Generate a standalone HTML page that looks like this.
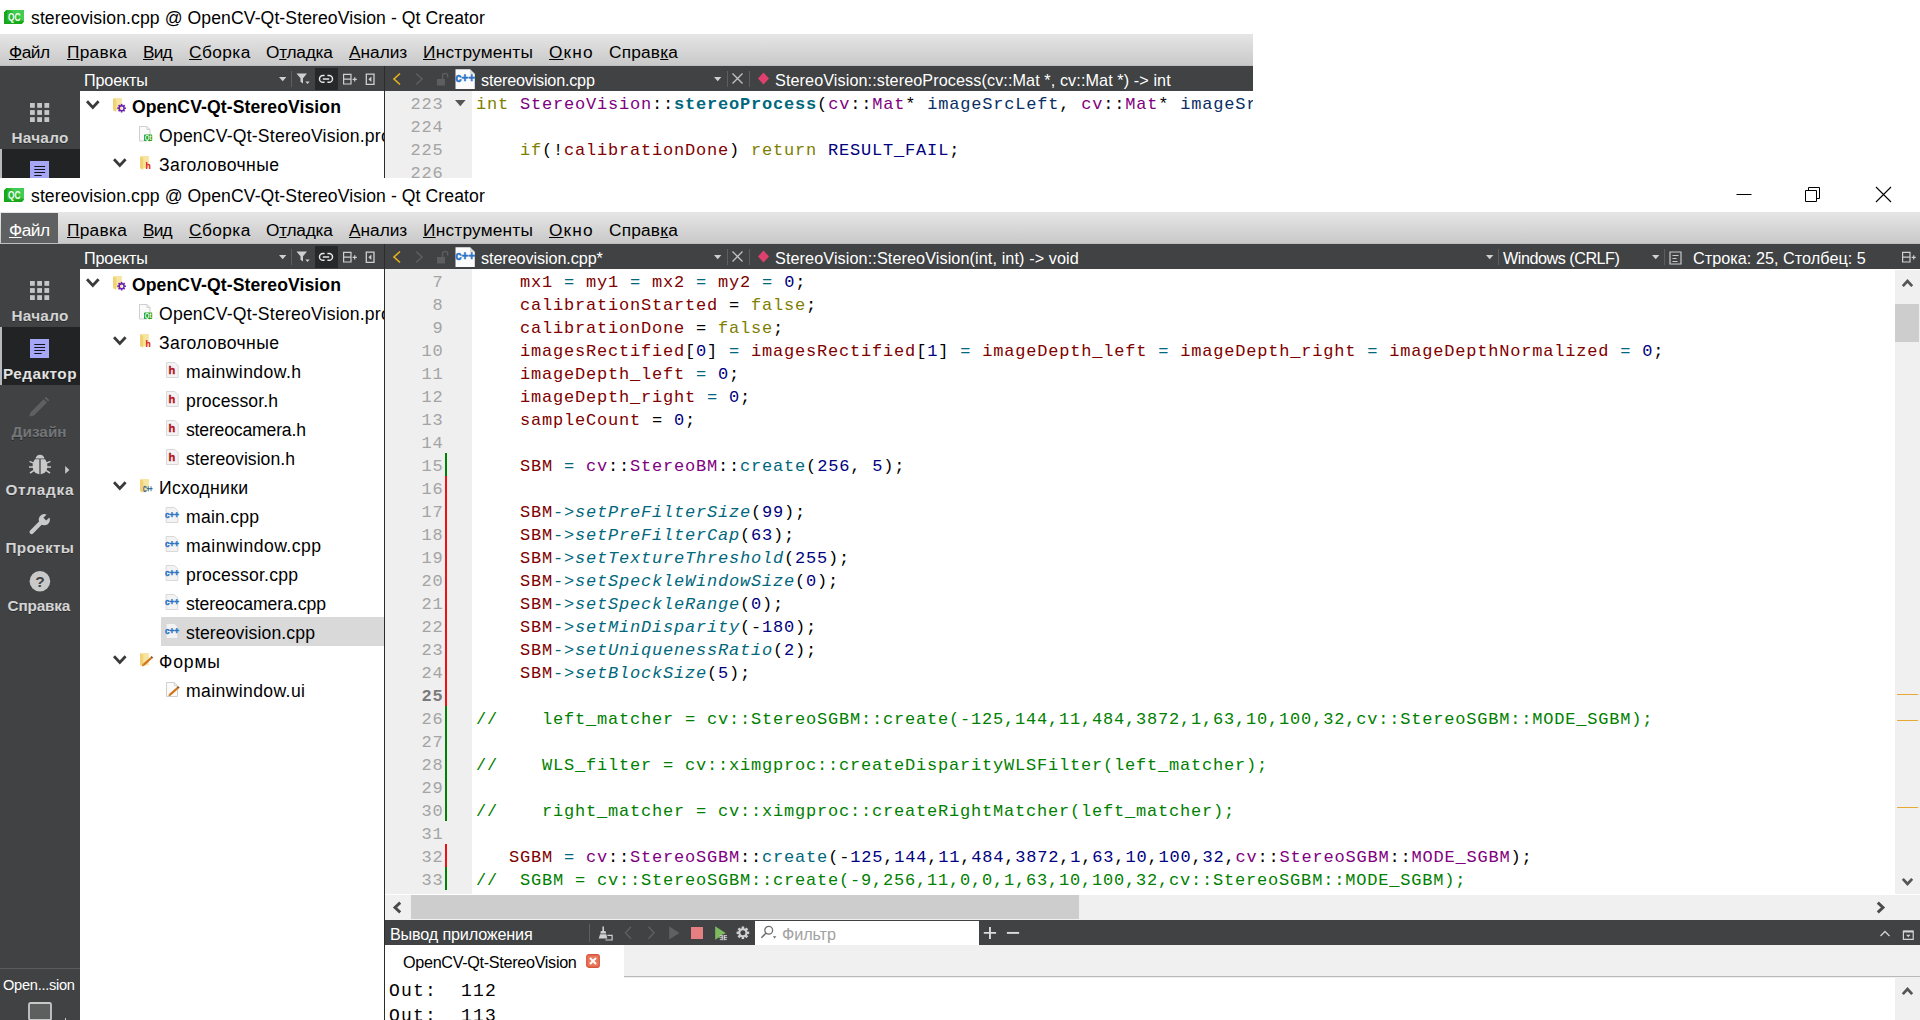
<!DOCTYPE html>
<html lang="ru"><head><meta charset="utf-8"><title>stereovision.cpp @ OpenCV-Qt-StereoVision - Qt Creator</title><style>
html,body{margin:0;padding:0}
body{width:1920px;height:1020px;overflow:hidden;background:#fff;position:relative;font-family:"Liberation Sans",sans-serif}
.win{position:absolute;overflow:hidden;background:#fff}
.r{position:absolute;display:block}
.t{position:absolute;white-space:pre;font-family:"Liberation Sans",sans-serif}
.cd{position:absolute;white-space:pre;font-family:"Liberation Mono",monospace;font-size:17px;letter-spacing:0.8px;line-height:23px;height:23px}
.ln{position:absolute;left:385px;width:58.600px;text-align:right;font-family:"Liberation Mono",monospace;font-size:17px;letter-spacing:0.8px;line-height:23px;height:23px;color:#a4a4a4}
u{text-decoration-thickness:1px;text-underline-offset:1px}
</style></head><body>
<div class="win" style="left:0;top:0;width:1253px;height:178px"><div class="r" style="left:0px;top:0px;width:1920px;height:35px;background:#fff;"></div><svg class="r" style="left:4px;top:10px" width="20" height="14" viewBox="0 0 20 14"><path d="M2.6 0H20V11.6L17.6 14H0V2.6Z" fill="#41cd52"/><path d="M2.6 0L0 2.6V14H17.6L20 11.6H3.2V0Z" fill="#17a81a"/><path d="M2.6 0H6L20 11.6L17.6 14H0V2.6Z" fill="#17a81a" opacity=".55"/><text x="3.9" y="10.600" font-family="Liberation Sans, sans-serif" font-size="11.800" font-weight="bold" fill="#f4fff4" textLength="12.6" lengthAdjust="spacingAndGlyphs">QC</text></svg><span class="t" style="left:31.0px;top:7.0px;font-size:17.6px;line-height:23px;color:#000;letter-spacing:0.095px;">stereovision.cpp @ OpenCV-Qt-StereoVision - Qt Creator</span><div class="r" style="left:0px;top:34px;width:1920px;height:32px;background:linear-gradient(#e6e6e6,#dedede 25%,#c8c8c8);"></div><div class="r" style="left:0px;top:65px;width:1920px;height:1px;background:#bebebe;"></div><span class="t" style="left:9px;top:41.3px;font-size:17.3px;line-height:22px;color:#000;letter-spacing:-0.511px"><u>Ф</u>айл</span><span class="t" style="left:67px;top:41.3px;font-size:17.3px;line-height:22px;color:#000;letter-spacing:0.272px"><u>П</u>равка</span><span class="t" style="left:143px;top:41.3px;font-size:17.3px;line-height:22px;color:#000;letter-spacing:-0.899px"><u>В</u>ид</span><span class="t" style="left:189px;top:41.3px;font-size:17.3px;line-height:22px;color:#000;letter-spacing:0.417px"><u>С</u>борка</span><span class="t" style="left:266px;top:41.3px;font-size:17.3px;line-height:22px;color:#000;letter-spacing:-0.264px">О<u>т</u>ладка</span><span class="t" style="left:349px;top:41.3px;font-size:17.3px;line-height:22px;color:#000;letter-spacing:-0.021px"><u>А</u>нализ</span><span class="t" style="left:423px;top:41.3px;font-size:17.3px;line-height:22px;color:#000;letter-spacing:0.213px"><u>И</u>нструменты</span><span class="t" style="left:549px;top:41.3px;font-size:17.3px;line-height:22px;color:#000;letter-spacing:1.133px"><u>О</u>кно</span><span class="t" style="left:609px;top:41.3px;font-size:17.3px;line-height:22px;color:#000;letter-spacing:0.189px">Справ<u>к</u>а</span><div class="r" style="left:0px;top:66px;width:1920px;height:25px;background:#404244;"></div><span class="t" style="left:84.0px;top:70.0px;font-size:16.2px;line-height:21px;color:#fff;letter-spacing:-0.168px;">Проекты</span><svg class="r" style="left:279px;top:76.8px" width="8" height="5" viewBox="0 0 8 5"><path d="M0 0H7.400L3.700 4.300Z" fill="#d0d0d0"/></svg><div class="r" style="left:291px;top:71px;width:1px;height:16px;background:#5c5e60;"></div><svg class="r" style="left:296px;top:73px" width="15" height="12" viewBox="0 0 15 12"><path d="M0.500 0.500H11L7 5.300V10.600L4.500 8.800V5.300Z" fill="#d0d0d0"/><path d="M9.300 8.600h4.400l-2.200 2.500z" fill="#d0d0d0"/></svg><div class="r" style="left:315px;top:68px;width:23px;height:22px;background:#262829;"></div><svg class="r" style="left:318px;top:74px" width="16" height="10" viewBox="0 0 16 10"><path d="M6.600 1.500H4.900a3.400 3.400 0 0 0 0 6.800H6.600 M9.400 1.500h1.700a3.400 3.400 0 0 1 0 6.800H9.400 M4.800 4.900H11.200" fill="none" stroke="#e8e8e8" stroke-width="1.500"/></svg><svg class="r" style="left:342px;top:73px" width="16" height="13" viewBox="0 0 16 13"><path d="M1.600 1.400h7.400v9.600h-7.400z M1.600 6.200h7.400" fill="none" stroke="#d0d0d0" stroke-width="1.200"/><path d="M10.600 6.300h4.200 M12.700 4.200v4.200" stroke="#d0d0d0" stroke-width="1.200"/></svg><svg class="r" style="left:365px;top:73px" width="11" height="13" viewBox="0 0 11 13"><path d="M1.300 1.100h7.700v10.200h-7.700z" fill="none" stroke="#d0d0d0" stroke-width="1.300"/><path d="M6.400 3.400v5.600l-3-2.800z" fill="#d0d0d0"/></svg><div class="r" style="left:384px;top:66px;width:1px;height:25px;background:#2b2c2d;"></div><svg class="r" style="left:391px;top:72px" width="12" height="14" viewBox="0 0 12 14"><path d="M9 1.5 L3 7 L9 12.5" fill="none" stroke="#e8b31c" stroke-width="1.6"/></svg><svg class="r" style="left:412.5px;top:72px" width="12" height="14" viewBox="0 0 12 14"><path d="M3 1.5 L9 7 L3 12.5" fill="none" stroke="#5c5e60" stroke-width="1.6"/></svg><svg class="r" style="left:436px;top:71px" width="14" height="16" viewBox="0 0 14 16"><rect x="1" y="8" width="8" height="6.5" fill="#5c5e60"/><path d="M6.5 8V5a2.6 2.6 0 0 1 5.2 0v1.5" fill="none" stroke="#5c5e60" stroke-width="1.4"/></svg><svg class="r" style="left:455px;top:69px" width="21" height="21" viewBox="0 0 21 21"><path d="M0.500 0.300H15L19.800 5V20H0.500Z" fill="#fbfbfb"/><path d="M15 0.300V5H19.800Z" fill="#dcdcdc"/><text x="0.200" y="12.800" font-family="Liberation Sans, sans-serif" font-weight="bold" font-size="12" fill="#2a74c8" stroke="#2a74c8" stroke-width="0.500" textLength="19.800" lengthAdjust="spacingAndGlyphs">c++</text></svg><span class="t" style="left:481.0px;top:70.0px;font-size:16.2px;line-height:21px;color:#fff;letter-spacing:-0.204px;">stereovision.cpp</span><svg class="r" style="left:714px;top:76.8px" width="8" height="5" viewBox="0 0 8 5"><path d="M0 0H7.400L3.700 4.300Z" fill="#d0d0d0"/></svg><div class="r" style="left:727px;top:71px;width:1px;height:16px;background:#5c5e60;"></div><svg class="r" style="left:731px;top:72px" width="13" height="13" viewBox="0 0 13 13"><path d="M1.5 1.5L11.5 11.5M11.5 1.5L1.5 11.5" stroke="#c4c4c4" stroke-width="1.3"/></svg><div class="r" style="left:749px;top:71px;width:1px;height:16px;background:#5c5e60;"></div><svg class="r" style="left:757px;top:72px" width="13" height="13" viewBox="0 0 13 13"><path d="M6.5 0.5L12 6.5L6.5 12.5L1 6.5Z" fill="#e0406e"/></svg><span class="t" style="left:775.0px;top:70.0px;font-size:16.2px;line-height:21px;color:#fff;letter-spacing:0.093px;">StereoVision::stereoProcess(cv::Mat *, cv::Mat *) -&gt; int</span><div class="r" style="left:0px;top:91px;width:80px;height:100px;background:#404244;"></div><svg class="r" style="left:29.6px;top:102.7px" width="20" height="20" viewBox="0 0 20 20"><rect x="0.0" y="0.0" width="4.800" height="4.800" fill="#c6c6c6"/><rect x="0.0" y="7.1" width="4.800" height="4.800" fill="#c6c6c6"/><rect x="0.0" y="14.2" width="4.800" height="4.800" fill="#c6c6c6"/><rect x="7.2" y="0.0" width="4.800" height="4.800" fill="#c6c6c6"/><rect x="7.2" y="7.1" width="4.800" height="4.800" fill="#c6c6c6"/><rect x="7.2" y="14.2" width="4.800" height="4.800" fill="#c6c6c6"/><rect x="14.4" y="0.0" width="4.800" height="4.800" fill="#c6c6c6"/><rect x="14.4" y="7.1" width="4.800" height="4.800" fill="#c6c6c6"/><rect x="14.4" y="14.2" width="4.800" height="4.800" fill="#c6c6c6"/></svg><span class="t" style="left:11.5px;top:127.9px;font-size:15.3px;line-height:20px;color:#d4d4d4;letter-spacing:0.273px;font-weight:bold;text-shadow:0 1px 0 rgba(0,0,0,.35);">Начало</span><div class="r" style="left:0px;top:149px;width:80px;height:58px;background:#212324;"></div><div class="r" style="left:0px;top:149px;width:2px;height:58px;background:#b8b8b8;"></div><svg class="r" style="left:30px;top:161px" width="19.3" height="19.3" viewBox="0 0 19.3 19.3"><rect width="19.3" height="19.3" fill="#a5a6f6"/><path d="M4.300 5.500h10.800M4.300 8.500h10.800M4.300 11.500h10.800M4.300 14.500h7.400" stroke="#101018" stroke-width="1"/></svg><span class="t" style="left:3.0px;top:185.9px;font-size:15.3px;line-height:20px;color:#e2e2e2;letter-spacing:0.472px;font-weight:bold;text-shadow:0 1px 0 rgba(0,0,0,.35);">Редактор</span><svg class="r" style="left:86px;top:100.0px" width="14" height="11" viewBox="0 0 14 11"><path d="M1 1.2 L6.8 7.4 L12.6 1.2" fill="none" stroke="#3a3a3a" stroke-width="2.8"/></svg><svg class="r" style="left:112.7px;top:98.2px" width="14" height="15" viewBox="0 0 14 15"><path d="M0.7 0H8.8V12.3H3.2Z" fill="#f7e4a0"/><path d="M0 0.3L3.3 2V13.8L0 12.3Z" fill="#f1d375"/><g transform="translate(8.6,10.2)"><rect x="-0.8" y="-4.3" width="1.6" height="2" fill="#6a1fb0" transform="rotate(0)"/><rect x="-0.8" y="-4.3" width="1.6" height="2" fill="#6a1fb0" transform="rotate(45)"/><rect x="-0.8" y="-4.3" width="1.6" height="2" fill="#6a1fb0" transform="rotate(90)"/><rect x="-0.8" y="-4.3" width="1.6" height="2" fill="#6a1fb0" transform="rotate(135)"/><rect x="-0.8" y="-4.3" width="1.6" height="2" fill="#6a1fb0" transform="rotate(180)"/><rect x="-0.8" y="-4.3" width="1.6" height="2" fill="#6a1fb0" transform="rotate(225)"/><rect x="-0.8" y="-4.3" width="1.6" height="2" fill="#6a1fb0" transform="rotate(270)"/><rect x="-0.8" y="-4.3" width="1.6" height="2" fill="#6a1fb0" transform="rotate(315)"/><circle r="2.4" fill="none" stroke="#6a1fb0" stroke-width="1.4"/></g></svg><span class="t" style="left:132.0px;top:95.5px;font-size:17.6px;line-height:23px;color:#000;letter-spacing:0.095px;font-weight:bold;">OpenCV-Qt-StereoVision</span><svg class="r" style="left:139px;top:126.3px" width="14" height="16" viewBox="0 0 14 16"><path d="M0.5 0.5h7.5l3 3v11.5h-10.5z" fill="#fafafa" stroke="#cfcfcf" stroke-width="1"/><path d="M8 0.5v3h3" fill="none" stroke="#cfcfcf" stroke-width="1"/><rect x="5" y="8.6" width="8.2" height="6.4" rx="0.8" fill="#21a321"/><text x="5.8" y="14.1" font-size="6.8" font-weight="bold" fill="#fff" font-family="Liberation Sans, sans-serif" textLength="6.6" lengthAdjust="spacingAndGlyphs">Qt</text></svg><span class="t" style="left:159.0px;top:124.5px;font-size:17.6px;line-height:23px;color:#000;letter-spacing:0.206px;">OpenCV-Qt-StereoVision.pro</span><svg class="r" style="left:113px;top:158.0px" width="14" height="11" viewBox="0 0 14 11"><path d="M1 1.2 L6.8 7.4 L12.6 1.2" fill="none" stroke="#3a3a3a" stroke-width="2.8"/></svg><svg class="r" style="left:139.8px;top:156.4px" width="14" height="15" viewBox="0 0 14 15"><path d="M0.7 0H8.8V12.3H3.2Z" fill="#f7e4a0"/><path d="M0 0.3L3.3 2V13.8L0 12.3Z" fill="#f1d375"/><text x="5.4" y="13.2" font-size="8.8" font-weight="bold" fill="#e01010" font-family="Liberation Sans, sans-serif">h</text></svg><span class="t" style="left:159.0px;top:153.5px;font-size:17.6px;line-height:23px;color:#000;letter-spacing:0.364px;">Заголовочные</span><div class="r" style="left:384px;top:91px;width:1px;height:100px;background:#2b2c2d;"></div><div class="r" style="left:385px;top:91px;width:87px;height:100px;background:#efefef;"></div><span class="ln" style="top:92.8px;">223</span><span class="cd" style="left:476px;top:92.8px"><span style="color:#808000">int</span><span style="color:#000"> </span><span style="color:#800080">StereoVision</span><span style="color:#000">::</span><span style="color:#00677c;font-weight:bold">stereoProcess</span><span style="color:#000">(</span><span style="color:#800080">cv</span><span style="color:#000">::</span><span style="color:#800080">Mat</span><span style="color:#000">* </span><span style="color:#092e64">imageSrcLeft</span><span style="color:#000">, </span><span style="color:#800080">cv</span><span style="color:#000">::</span><span style="color:#800080">Mat</span><span style="color:#000">* </span><span style="color:#092e64">imageSrcRight</span></span><span class="ln" style="top:115.8px;">224</span><span class="ln" style="top:138.8px;">225</span><span class="cd" style="left:520px;top:138.8px"><span style="color:#808000">if</span><span style="color:#000">(!</span><span style="color:#800000">calibrationDone</span><span style="color:#000">) </span><span style="color:#808000">return</span><span style="color:#000"> </span><span style="color:#000080">RESULT_FAIL</span><span style="color:#000">;</span></span><span class="ln" style="top:161.8px;">226</span><svg class="r" style="left:455px;top:99.5px" width="11" height="7" viewBox="0 0 11 7"><path d="M0 0H10.600L5.300 6.200Z" fill="#555"/></svg></div>
<div class="win" style="left:0;top:178px;width:1920px;height:842px"><div class="r" style="left:0px;top:0px;width:1920px;height:35px;background:#fff;"></div><svg class="r" style="left:4px;top:10px" width="20" height="14" viewBox="0 0 20 14"><path d="M2.6 0H20V11.6L17.6 14H0V2.6Z" fill="#41cd52"/><path d="M2.6 0L0 2.6V14H17.6L20 11.6H3.2V0Z" fill="#17a81a"/><path d="M2.6 0H6L20 11.6L17.6 14H0V2.6Z" fill="#17a81a" opacity=".55"/><text x="3.9" y="10.600" font-family="Liberation Sans, sans-serif" font-size="11.800" font-weight="bold" fill="#f4fff4" textLength="12.6" lengthAdjust="spacingAndGlyphs">QC</text></svg><span class="t" style="left:31.0px;top:7.0px;font-size:17.6px;line-height:23px;color:#000;letter-spacing:0.095px;">stereovision.cpp @ OpenCV-Qt-StereoVision - Qt Creator</span><svg class="r" style="left:1735px;top:8px" width="20" height="20" viewBox="0 0 20 20"><path d="M1.5 8.5H16.5" stroke="#000" stroke-width="1"/></svg><svg class="r" style="left:1804px;top:7px" width="20" height="20" viewBox="0 0 20 20"><path d="M1.5 5.5h11v11h-11z M4.5 5.5v-3h11v11h-3" fill="none" stroke="#000" stroke-width="1"/></svg><svg class="r" style="left:1875px;top:8px" width="20" height="20" viewBox="0 0 20 20"><path d="M1 1 L16 16 M16 1 L1 16" stroke="#000" stroke-width="1.1"/></svg><div class="r" style="left:0px;top:34px;width:1920px;height:32px;background:linear-gradient(#e6e6e6,#dedede 25%,#c8c8c8);"></div><div class="r" style="left:0px;top:65px;width:1920px;height:1px;background:#bebebe;"></div><div class="r" style="left:1px;top:35px;width:57px;height:30px;background:#5f6061;"></div><span class="t" style="left:9px;top:41.3px;font-size:17.3px;line-height:22px;color:#fff;letter-spacing:-0.511px"><u>Ф</u>айл</span><span class="t" style="left:67px;top:41.3px;font-size:17.3px;line-height:22px;color:#000;letter-spacing:0.272px"><u>П</u>равка</span><span class="t" style="left:143px;top:41.3px;font-size:17.3px;line-height:22px;color:#000;letter-spacing:-0.899px"><u>В</u>ид</span><span class="t" style="left:189px;top:41.3px;font-size:17.3px;line-height:22px;color:#000;letter-spacing:0.417px"><u>С</u>борка</span><span class="t" style="left:266px;top:41.3px;font-size:17.3px;line-height:22px;color:#000;letter-spacing:-0.264px">О<u>т</u>ладка</span><span class="t" style="left:349px;top:41.3px;font-size:17.3px;line-height:22px;color:#000;letter-spacing:-0.021px"><u>А</u>нализ</span><span class="t" style="left:423px;top:41.3px;font-size:17.3px;line-height:22px;color:#000;letter-spacing:0.213px"><u>И</u>нструменты</span><span class="t" style="left:549px;top:41.3px;font-size:17.3px;line-height:22px;color:#000;letter-spacing:1.133px"><u>О</u>кно</span><span class="t" style="left:609px;top:41.3px;font-size:17.3px;line-height:22px;color:#000;letter-spacing:0.189px">Справ<u>к</u>а</span><div class="r" style="left:0px;top:66px;width:1920px;height:25px;background:#404244;"></div><span class="t" style="left:84.0px;top:70.0px;font-size:16.2px;line-height:21px;color:#fff;letter-spacing:-0.168px;">Проекты</span><svg class="r" style="left:279px;top:76.8px" width="8" height="5" viewBox="0 0 8 5"><path d="M0 0H7.400L3.700 4.300Z" fill="#d0d0d0"/></svg><div class="r" style="left:291px;top:71px;width:1px;height:16px;background:#5c5e60;"></div><svg class="r" style="left:296px;top:73px" width="15" height="12" viewBox="0 0 15 12"><path d="M0.500 0.500H11L7 5.300V10.600L4.500 8.800V5.300Z" fill="#d0d0d0"/><path d="M9.300 8.600h4.400l-2.200 2.500z" fill="#d0d0d0"/></svg><div class="r" style="left:315px;top:68px;width:23px;height:22px;background:#262829;"></div><svg class="r" style="left:318px;top:74px" width="16" height="10" viewBox="0 0 16 10"><path d="M6.600 1.500H4.900a3.400 3.400 0 0 0 0 6.800H6.600 M9.400 1.500h1.700a3.400 3.400 0 0 1 0 6.800H9.400 M4.800 4.900H11.200" fill="none" stroke="#e8e8e8" stroke-width="1.500"/></svg><svg class="r" style="left:342px;top:73px" width="16" height="13" viewBox="0 0 16 13"><path d="M1.600 1.400h7.400v9.600h-7.400z M1.600 6.200h7.400" fill="none" stroke="#d0d0d0" stroke-width="1.200"/><path d="M10.600 6.300h4.200 M12.700 4.200v4.200" stroke="#d0d0d0" stroke-width="1.200"/></svg><svg class="r" style="left:365px;top:73px" width="11" height="13" viewBox="0 0 11 13"><path d="M1.300 1.100h7.700v10.200h-7.700z" fill="none" stroke="#d0d0d0" stroke-width="1.300"/><path d="M6.400 3.400v5.600l-3-2.800z" fill="#d0d0d0"/></svg><div class="r" style="left:384px;top:66px;width:1px;height:25px;background:#2b2c2d;"></div><svg class="r" style="left:391px;top:72px" width="12" height="14" viewBox="0 0 12 14"><path d="M9 1.5 L3 7 L9 12.5" fill="none" stroke="#e8b31c" stroke-width="1.6"/></svg><svg class="r" style="left:412.5px;top:72px" width="12" height="14" viewBox="0 0 12 14"><path d="M3 1.5 L9 7 L3 12.5" fill="none" stroke="#5c5e60" stroke-width="1.6"/></svg><svg class="r" style="left:436px;top:71px" width="14" height="16" viewBox="0 0 14 16"><rect x="1" y="8" width="8" height="6.5" fill="#5c5e60"/><path d="M6.5 8V5a2.6 2.6 0 0 1 5.2 0v1.5" fill="none" stroke="#5c5e60" stroke-width="1.4"/></svg><svg class="r" style="left:455px;top:69px" width="21" height="21" viewBox="0 0 21 21"><path d="M0.500 0.300H15L19.800 5V20H0.500Z" fill="#fbfbfb"/><path d="M15 0.300V5H19.800Z" fill="#dcdcdc"/><text x="0.200" y="12.800" font-family="Liberation Sans, sans-serif" font-weight="bold" font-size="12" fill="#2a74c8" stroke="#2a74c8" stroke-width="0.500" textLength="19.800" lengthAdjust="spacingAndGlyphs">c++</text></svg><span class="t" style="left:481.0px;top:70.0px;font-size:16.2px;line-height:21px;color:#fff;letter-spacing:-0.086px;">stereovision.cpp*</span><svg class="r" style="left:714px;top:76.8px" width="8" height="5" viewBox="0 0 8 5"><path d="M0 0H7.400L3.700 4.300Z" fill="#d0d0d0"/></svg><div class="r" style="left:727px;top:71px;width:1px;height:16px;background:#5c5e60;"></div><svg class="r" style="left:731px;top:72px" width="13" height="13" viewBox="0 0 13 13"><path d="M1.5 1.5L11.5 11.5M11.5 1.5L1.5 11.5" stroke="#c4c4c4" stroke-width="1.3"/></svg><div class="r" style="left:749px;top:71px;width:1px;height:16px;background:#5c5e60;"></div><svg class="r" style="left:757px;top:72px" width="13" height="13" viewBox="0 0 13 13"><path d="M6.5 0.5L12 6.5L6.5 12.5L1 6.5Z" fill="#e0406e"/></svg><span class="t" style="left:775.0px;top:70.0px;font-size:16.2px;line-height:21px;color:#fff;letter-spacing:0.100px;">StereoVision::StereoVision(int, int) -&gt; void</span><svg class="r" style="left:1486px;top:76.8px" width="8" height="5" viewBox="0 0 8 5"><path d="M0 0H7.400L3.700 4.300Z" fill="#d0d0d0"/></svg><div class="r" style="left:1498px;top:71px;width:1px;height:16px;background:#5c5e60;"></div><span class="t" style="left:1503.0px;top:70.0px;font-size:16.2px;line-height:21px;color:#fff;letter-spacing:-0.486px;">Windows (CRLF)</span><svg class="r" style="left:1652px;top:76.8px" width="8" height="5" viewBox="0 0 8 5"><path d="M0 0H7.400L3.700 4.300Z" fill="#d0d0d0"/></svg><div class="r" style="left:1664px;top:71px;width:1px;height:16px;background:#5c5e60;"></div><svg class="r" style="left:1669px;top:72.7px" width="13" height="14" viewBox="0 0 13 14"><path d="M1 1h11v12H1z" fill="none" stroke="#c8c8c8" stroke-width="1.2"/><path d="M3.5 4.5h6M3.5 7.5h4M3.5 10.5h5" stroke="#c8c8c8" stroke-width="1.2"/></svg><span class="t" style="left:1693.0px;top:70.0px;font-size:16.2px;line-height:21px;color:#fff;letter-spacing:0.045px;">Строка: 25, Столбец: 5</span><svg class="r" style="left:1901px;top:73px" width="18" height="13" viewBox="0 0 18 13"><path d="M1.600 1.400h7.400v9.600h-7.400z M1.600 6.200h7.400" fill="none" stroke="#d0d0d0" stroke-width="1.200"/><path d="M10.600 6.300h4.200 M12.700 4.200v4.200" stroke="#d0d0d0" stroke-width="1.200"/></svg><div class="r" style="left:0px;top:91px;width:80px;height:760px;background:#404244;"></div><svg class="r" style="left:29.6px;top:102.7px" width="20" height="20" viewBox="0 0 20 20"><rect x="0.0" y="0.0" width="4.800" height="4.800" fill="#c6c6c6"/><rect x="0.0" y="7.1" width="4.800" height="4.800" fill="#c6c6c6"/><rect x="0.0" y="14.2" width="4.800" height="4.800" fill="#c6c6c6"/><rect x="7.2" y="0.0" width="4.800" height="4.800" fill="#c6c6c6"/><rect x="7.2" y="7.1" width="4.800" height="4.800" fill="#c6c6c6"/><rect x="7.2" y="14.2" width="4.800" height="4.800" fill="#c6c6c6"/><rect x="14.4" y="0.0" width="4.800" height="4.800" fill="#c6c6c6"/><rect x="14.4" y="7.1" width="4.800" height="4.800" fill="#c6c6c6"/><rect x="14.4" y="14.2" width="4.800" height="4.800" fill="#c6c6c6"/></svg><span class="t" style="left:11.5px;top:127.9px;font-size:15.3px;line-height:20px;color:#d4d4d4;letter-spacing:0.273px;font-weight:bold;text-shadow:0 1px 0 rgba(0,0,0,.35);">Начало</span><div class="r" style="left:0px;top:149px;width:80px;height:58px;background:#212324;"></div><div class="r" style="left:0px;top:149px;width:2px;height:58px;background:#b8b8b8;"></div><svg class="r" style="left:30px;top:161px" width="19.3" height="19.3" viewBox="0 0 19.3 19.3"><rect width="19.3" height="19.3" fill="#a5a6f6"/><path d="M4.300 5.500h10.800M4.300 8.500h10.800M4.300 11.500h10.800M4.300 14.500h7.400" stroke="#101018" stroke-width="1"/></svg><span class="t" style="left:3.0px;top:185.9px;font-size:15.3px;line-height:20px;color:#e2e2e2;letter-spacing:0.472px;font-weight:bold;text-shadow:0 1px 0 rgba(0,0,0,.35);">Редактор</span><svg class="r" style="left:28px;top:218px" width="24" height="24" viewBox="0 0 24 24"><path d="M1.2 20.6L2.6 16.2L15.6 3.2L19 6.6L6 19.6Z" fill="#5e6062"/><path d="M16.6 2.2L18 0.8L21.4 4.2L20 5.6Z" fill="#5e6062"/></svg><span class="t" style="left:11.5px;top:243.9px;font-size:15.3px;line-height:20px;color:#737577;letter-spacing:0.047px;font-weight:bold;text-shadow:0 1px 0 rgba(0,0,0,.35);">Дизайн</span><svg class="r" style="left:28px;top:276px" width="24" height="22" viewBox="0 0 24 22"><path d="M12 0.8c2.4 0 4 1.6 4.4 3.6H7.6C8 2.4 9.600 0.8 12 0.8z" fill="#c9c9c9"/><path d="M7 5.200h10c1.6 2 2.400 4.400 2.400 7 0 4.400-3 8-7.400 8s-7.400-3.600-7.400-8c0-2.600 0.800-5 2.400-7z" fill="#c9c9c9"/><path d="M12 5V20.400" stroke="#404244" stroke-width="1.3"/><path d="M1.600 7.400L6 9.400M1 13h4.400M2 19l4-2.600M22.400 7.400L18 9.400M23 13h-4.400M22 19l-4-2.600" stroke="#c9c9c9" stroke-width="1.5"/></svg><span class="t" style="left:5.4px;top:301.9px;font-size:15.3px;line-height:20px;color:#d4d4d4;letter-spacing:0.800px;font-weight:bold;text-shadow:0 1px 0 rgba(0,0,0,.35);">Отладка</span><svg class="r" style="left:64.6px;top:288.4px" width="5" height="8" viewBox="0 0 5 8"><path d="M0.2 0L4.4 3.900L0.2 7.800Z" fill="#c9c9c9"/></svg><svg class="r" style="left:28px;top:334px" width="24" height="24" viewBox="0 0 24 24"><path d="M3.600 20L12 11.600" stroke="#c9c9c9" stroke-width="4.200" stroke-linecap="round"/><path d="M21.400 5.400L18.200 8.600L15.400 5.800L18.600 2.600A5.600 5.600 0 1 0 21.400 5.400Z" fill="#c9c9c9"/></svg><span class="t" style="left:5.4px;top:359.9px;font-size:15.3px;line-height:20px;color:#d4d4d4;letter-spacing:0.347px;font-weight:bold;text-shadow:0 1px 0 rgba(0,0,0,.35);">Проекты</span><svg class="r" style="left:29px;top:393px" width="22" height="22" viewBox="0 0 22 22"><circle cx="10.9" cy="10.300" r="10.300" fill="#c9c9c9"/><text x="10.9" y="16" text-anchor="middle" font-family="Liberation Sans, sans-serif" font-weight="bold" font-size="15.5" fill="#404244">?</text></svg><span class="t" style="left:7.6px;top:417.9px;font-size:15.3px;line-height:20px;color:#d4d4d4;letter-spacing:-0.153px;font-weight:bold;text-shadow:0 1px 0 rgba(0,0,0,.35);">Справка</span><svg class="r" style="left:86px;top:100.0px" width="14" height="11" viewBox="0 0 14 11"><path d="M1 1.2 L6.8 7.4 L12.6 1.2" fill="none" stroke="#3a3a3a" stroke-width="2.8"/></svg><svg class="r" style="left:112.7px;top:98.2px" width="14" height="15" viewBox="0 0 14 15"><path d="M0.7 0H8.8V12.3H3.2Z" fill="#f7e4a0"/><path d="M0 0.3L3.3 2V13.8L0 12.3Z" fill="#f1d375"/><g transform="translate(8.6,10.2)"><rect x="-0.8" y="-4.3" width="1.6" height="2" fill="#6a1fb0" transform="rotate(0)"/><rect x="-0.8" y="-4.3" width="1.6" height="2" fill="#6a1fb0" transform="rotate(45)"/><rect x="-0.8" y="-4.3" width="1.6" height="2" fill="#6a1fb0" transform="rotate(90)"/><rect x="-0.8" y="-4.3" width="1.6" height="2" fill="#6a1fb0" transform="rotate(135)"/><rect x="-0.8" y="-4.3" width="1.6" height="2" fill="#6a1fb0" transform="rotate(180)"/><rect x="-0.8" y="-4.3" width="1.6" height="2" fill="#6a1fb0" transform="rotate(225)"/><rect x="-0.8" y="-4.3" width="1.6" height="2" fill="#6a1fb0" transform="rotate(270)"/><rect x="-0.8" y="-4.3" width="1.6" height="2" fill="#6a1fb0" transform="rotate(315)"/><circle r="2.4" fill="none" stroke="#6a1fb0" stroke-width="1.4"/></g></svg><span class="t" style="left:132.0px;top:95.5px;font-size:17.6px;line-height:23px;color:#000;letter-spacing:0.095px;font-weight:bold;">OpenCV-Qt-StereoVision</span><svg class="r" style="left:139px;top:126.3px" width="14" height="16" viewBox="0 0 14 16"><path d="M0.5 0.5h7.5l3 3v11.5h-10.5z" fill="#fafafa" stroke="#cfcfcf" stroke-width="1"/><path d="M8 0.5v3h3" fill="none" stroke="#cfcfcf" stroke-width="1"/><rect x="5" y="8.6" width="8.2" height="6.4" rx="0.8" fill="#21a321"/><text x="5.8" y="14.1" font-size="6.8" font-weight="bold" fill="#fff" font-family="Liberation Sans, sans-serif" textLength="6.6" lengthAdjust="spacingAndGlyphs">Qt</text></svg><span class="t" style="left:159.0px;top:124.5px;font-size:17.6px;line-height:23px;color:#000;letter-spacing:0.206px;">OpenCV-Qt-StereoVision.pro</span><svg class="r" style="left:113px;top:158.0px" width="14" height="11" viewBox="0 0 14 11"><path d="M1 1.2 L6.8 7.4 L12.6 1.2" fill="none" stroke="#3a3a3a" stroke-width="2.8"/></svg><svg class="r" style="left:139.8px;top:156.4px" width="14" height="15" viewBox="0 0 14 15"><path d="M0.7 0H8.8V12.3H3.2Z" fill="#f7e4a0"/><path d="M0 0.3L3.3 2V13.8L0 12.3Z" fill="#f1d375"/><text x="5.4" y="13.2" font-size="8.8" font-weight="bold" fill="#e01010" font-family="Liberation Sans, sans-serif">h</text></svg><span class="t" style="left:159.0px;top:153.5px;font-size:17.6px;line-height:23px;color:#000;letter-spacing:0.364px;">Заголовочные</span><svg class="r" style="left:166.2px;top:183.8px" width="14" height="17" viewBox="0 0 14 17"><path d="M0.5 0.5H8.8L12.2 3.9V15.5H0.5Z" fill="#f3f3f3" stroke="#d8d8d8" stroke-width="1"/><text x="2.4" y="11.9" font-size="10.5" font-weight="bold" fill="#b3121c" stroke="#b3121c" stroke-width="0.3" font-family="Liberation Sans, sans-serif" textLength="6.8" lengthAdjust="spacingAndGlyphs">h</text></svg><span class="t" style="left:186.0px;top:182.5px;font-size:17.6px;line-height:23px;color:#000;letter-spacing:0.404px;">mainwindow.h</span><svg class="r" style="left:166.2px;top:212.8px" width="14" height="17" viewBox="0 0 14 17"><path d="M0.5 0.5H8.8L12.2 3.9V15.5H0.5Z" fill="#f3f3f3" stroke="#d8d8d8" stroke-width="1"/><text x="2.4" y="11.9" font-size="10.5" font-weight="bold" fill="#b3121c" stroke="#b3121c" stroke-width="0.3" font-family="Liberation Sans, sans-serif" textLength="6.8" lengthAdjust="spacingAndGlyphs">h</text></svg><span class="t" style="left:186.0px;top:211.5px;font-size:17.6px;line-height:23px;color:#000;letter-spacing:0.101px;">processor.h</span><svg class="r" style="left:166.2px;top:241.8px" width="14" height="17" viewBox="0 0 14 17"><path d="M0.5 0.5H8.8L12.2 3.9V15.5H0.5Z" fill="#f3f3f3" stroke="#d8d8d8" stroke-width="1"/><text x="2.4" y="11.9" font-size="10.5" font-weight="bold" fill="#b3121c" stroke="#b3121c" stroke-width="0.3" font-family="Liberation Sans, sans-serif" textLength="6.8" lengthAdjust="spacingAndGlyphs">h</text></svg><span class="t" style="left:186.0px;top:240.5px;font-size:17.6px;line-height:23px;color:#000;letter-spacing:-0.176px;">stereocamera.h</span><svg class="r" style="left:166.2px;top:270.8px" width="14" height="17" viewBox="0 0 14 17"><path d="M0.5 0.5H8.8L12.2 3.9V15.5H0.5Z" fill="#f3f3f3" stroke="#d8d8d8" stroke-width="1"/><text x="2.4" y="11.9" font-size="10.5" font-weight="bold" fill="#b3121c" stroke="#b3121c" stroke-width="0.3" font-family="Liberation Sans, sans-serif" textLength="6.8" lengthAdjust="spacingAndGlyphs">h</text></svg><span class="t" style="left:186.0px;top:269.5px;font-size:17.6px;line-height:23px;color:#000;letter-spacing:0.031px;">stereovision.h</span><svg class="r" style="left:113px;top:303.0px" width="14" height="11" viewBox="0 0 14 11"><path d="M1 1.2 L6.8 7.4 L12.6 1.2" fill="none" stroke="#3a3a3a" stroke-width="2.8"/></svg><svg class="r" style="left:139.7px;top:301.3px" width="14" height="15" viewBox="0 0 14 15"><path d="M0.7 0H8.8V12.3H3.2Z" fill="#f7e4a0"/><path d="M0 0.3L3.3 2V13.8L0 12.3Z" fill="#f1d375"/><text x="3" y="12.6" font-size="8.5" font-weight="bold" fill="#2f6496" stroke="#2f6496" stroke-width="0.3" font-family="Liberation Sans, sans-serif" textLength="9.5" lengthAdjust="spacingAndGlyphs">C++</text></svg><span class="t" style="left:159.0px;top:298.5px;font-size:17.6px;line-height:23px;color:#000;letter-spacing:0.274px;">Исходники</span><svg class="r" style="left:164.7px;top:329.3px" width="16" height="17" viewBox="0 0 16 17"><g transform="translate(0.6,0)"><path d="M0.5 0.5H8.8L12.2 3.9V15.5H0.5Z" fill="#f3f3f3" stroke="#d8d8d8" stroke-width="1"/></g><text x="0" y="10.9" font-size="9.5" font-weight="bold" fill="#2a72c4" stroke="#2a72c4" stroke-width="0.45" font-family="Liberation Sans, sans-serif" textLength="14" lengthAdjust="spacingAndGlyphs">c++</text></svg><span class="t" style="left:186.0px;top:327.5px;font-size:17.6px;line-height:23px;color:#000;letter-spacing:0.226px;">main.cpp</span><svg class="r" style="left:164.7px;top:358.3px" width="16" height="17" viewBox="0 0 16 17"><g transform="translate(0.6,0)"><path d="M0.5 0.5H8.8L12.2 3.9V15.5H0.5Z" fill="#f3f3f3" stroke="#d8d8d8" stroke-width="1"/></g><text x="0" y="10.9" font-size="9.5" font-weight="bold" fill="#2a72c4" stroke="#2a72c4" stroke-width="0.45" font-family="Liberation Sans, sans-serif" textLength="14" lengthAdjust="spacingAndGlyphs">c++</text></svg><span class="t" style="left:186.0px;top:356.5px;font-size:17.6px;line-height:23px;color:#000;letter-spacing:0.451px;">mainwindow.cpp</span><svg class="r" style="left:164.7px;top:387.3px" width="16" height="17" viewBox="0 0 16 17"><g transform="translate(0.6,0)"><path d="M0.5 0.5H8.8L12.2 3.9V15.5H0.5Z" fill="#f3f3f3" stroke="#d8d8d8" stroke-width="1"/></g><text x="0" y="10.9" font-size="9.5" font-weight="bold" fill="#2a72c4" stroke="#2a72c4" stroke-width="0.45" font-family="Liberation Sans, sans-serif" textLength="14" lengthAdjust="spacingAndGlyphs">c++</text></svg><span class="t" style="left:186.0px;top:385.5px;font-size:17.6px;line-height:23px;color:#000;letter-spacing:0.202px;">processor.cpp</span><svg class="r" style="left:164.7px;top:416.3px" width="16" height="17" viewBox="0 0 16 17"><g transform="translate(0.6,0)"><path d="M0.5 0.5H8.8L12.2 3.9V15.5H0.5Z" fill="#f3f3f3" stroke="#d8d8d8" stroke-width="1"/></g><text x="0" y="10.9" font-size="9.5" font-weight="bold" fill="#2a72c4" stroke="#2a72c4" stroke-width="0.45" font-family="Liberation Sans, sans-serif" textLength="14" lengthAdjust="spacingAndGlyphs">c++</text></svg><span class="t" style="left:186.0px;top:414.5px;font-size:17.6px;line-height:23px;color:#000;letter-spacing:-0.058px;">stereocamera.cpp</span><div class="r" style="left:161px;top:439.0px;width:223px;height:29px;background:#d9d9d9;"></div><svg class="r" style="left:164.7px;top:445.3px" width="16" height="17" viewBox="0 0 16 17"><g transform="translate(0.6,0)"><path d="M0.5 0.5H8.8L12.2 3.9V15.5H0.5Z" fill="#f3f3f3" stroke="#d8d8d8" stroke-width="1"/></g><text x="0" y="10.9" font-size="9.5" font-weight="bold" fill="#2a72c4" stroke="#2a72c4" stroke-width="0.45" font-family="Liberation Sans, sans-serif" textLength="14" lengthAdjust="spacingAndGlyphs">c++</text></svg><span class="t" style="left:186.0px;top:443.5px;font-size:17.6px;line-height:23px;color:#000;letter-spacing:0.121px;">stereovision.cpp</span><svg class="r" style="left:113px;top:477.0px" width="14" height="11" viewBox="0 0 14 11"><path d="M1 1.2 L6.8 7.4 L12.6 1.2" fill="none" stroke="#3a3a3a" stroke-width="2.8"/></svg><svg class="r" style="left:139.7px;top:475.1px" width="14" height="15" viewBox="0 0 14 15"><path d="M0.7 0H8.8V12.3H3.2Z" fill="#f7e4a0"/><path d="M0 0.3L3.3 2V13.8L0 12.3Z" fill="#f1d375"/><path d="M3.500 11.800L11.200 5" stroke="#cf741a" stroke-width="2.300"/><path d="M2.100 13.300L2.600 10.900L4.400 12.700Z" fill="#cf741a"/><path d="M11.200 5L12.400 3.950" stroke="#8a4a12" stroke-width="2.300"/></svg><span class="t" style="left:159.0px;top:472.5px;font-size:17.6px;line-height:23px;color:#000;letter-spacing:0.823px;">Формы</span><svg class="r" style="left:166.2px;top:503.8px" width="14" height="16" viewBox="0 0 14 16"><path d="M0.5 0.5H8.3L11.5 3.7V14.5H0.5Z" fill="#fafafa" stroke="#d0d0d0" stroke-width="1"/><path d="M8.3 0.5V3.7H11.5" fill="none" stroke="#d0d0d0" stroke-width="1"/><path d="M3.800 12.800L11.600 6" stroke="#cf741a" stroke-width="2.300"/><path d="M2.400 14.300L2.900 11.900L4.700 13.700Z" fill="#cf741a"/><path d="M11.600 6L12.800 4.950" stroke="#8a4a12" stroke-width="2.300"/></svg><span class="t" style="left:186.0px;top:501.5px;font-size:17.6px;line-height:23px;color:#000;letter-spacing:0.378px;">mainwindow.ui</span><div class="r" style="left:384px;top:91px;width:1px;height:760px;background:#2b2c2d;"></div><div class="r" style="left:385px;top:91px;width:87px;height:625px;background:#efefef;"></div><span class="ln" style="top:92.8px;">7</span><span class="cd" style="left:520px;top:92.8px"><span style="color:#800000">mx1</span><span style="color:#00677c"> = </span><span style="color:#800000">my1</span><span style="color:#00677c"> = </span><span style="color:#800000">mx2</span><span style="color:#00677c"> = </span><span style="color:#800000">my2</span><span style="color:#00677c"> = </span><span style="color:#000080">0</span><span style="color:#000">;</span></span><span class="ln" style="top:115.8px;">8</span><span class="cd" style="left:520px;top:115.8px"><span style="color:#800000">calibrationStarted</span><span style="color:#000"> = </span><span style="color:#808000">false</span><span style="color:#000">;</span></span><span class="ln" style="top:138.8px;">9</span><span class="cd" style="left:520px;top:138.8px"><span style="color:#800000">calibrationDone</span><span style="color:#000"> = </span><span style="color:#808000">false</span><span style="color:#000">;</span></span><span class="ln" style="top:161.8px;">10</span><span class="cd" style="left:520px;top:161.8px"><span style="color:#800000">imagesRectified</span><span style="color:#000">[</span><span style="color:#000080">0</span><span style="color:#000">]</span><span style="color:#00677c"> = </span><span style="color:#800000">imagesRectified</span><span style="color:#000">[</span><span style="color:#000080">1</span><span style="color:#000">]</span><span style="color:#00677c"> = </span><span style="color:#800000">imageDepth_left</span><span style="color:#00677c"> = </span><span style="color:#800000">imageDepth_right</span><span style="color:#00677c"> = </span><span style="color:#800000">imageDepthNormalized</span><span style="color:#00677c"> = </span><span style="color:#000080">0</span><span style="color:#000">;</span></span><span class="ln" style="top:184.8px;">11</span><span class="cd" style="left:520px;top:184.8px"><span style="color:#800000">imageDepth_left</span><span style="color:#00677c"> = </span><span style="color:#000080">0</span><span style="color:#000">;</span></span><span class="ln" style="top:207.8px;">12</span><span class="cd" style="left:520px;top:207.8px"><span style="color:#800000">imageDepth_right</span><span style="color:#00677c"> = </span><span style="color:#000080">0</span><span style="color:#000">;</span></span><span class="ln" style="top:230.8px;">13</span><span class="cd" style="left:520px;top:230.8px"><span style="color:#800000">sampleCount</span><span style="color:#000"> = </span><span style="color:#000080">0</span><span style="color:#000">;</span></span><span class="ln" style="top:253.8px;">14</span><span class="ln" style="top:276.8px;">15</span><span class="cd" style="left:520px;top:276.8px"><span style="color:#800000">SBM</span><span style="color:#00677c"> = </span><span style="color:#800080">cv</span><span style="color:#000">::</span><span style="color:#800080">StereoBM</span><span style="color:#000">::</span><span style="color:#00677c">create</span><span style="color:#000">(</span><span style="color:#000080">256</span><span style="color:#000">, </span><span style="color:#000080">5</span><span style="color:#000">);</span></span><span class="ln" style="top:299.8px;">16</span><span class="ln" style="top:322.8px;">17</span><span class="cd" style="left:520px;top:322.8px"><span style="color:#800000">SBM</span><span style="color:#00677c">-&gt;</span><span style="color:#00677c;font-style:italic">setPreFilterSize</span><span style="color:#000">(</span><span style="color:#000080">99</span><span style="color:#000">);</span></span><span class="ln" style="top:345.8px;">18</span><span class="cd" style="left:520px;top:345.8px"><span style="color:#800000">SBM</span><span style="color:#00677c">-&gt;</span><span style="color:#00677c;font-style:italic">setPreFilterCap</span><span style="color:#000">(</span><span style="color:#000080">63</span><span style="color:#000">);</span></span><span class="ln" style="top:368.8px;">19</span><span class="cd" style="left:520px;top:368.8px"><span style="color:#800000">SBM</span><span style="color:#00677c">-&gt;</span><span style="color:#00677c;font-style:italic">setTextureThreshold</span><span style="color:#000">(</span><span style="color:#000080">255</span><span style="color:#000">);</span></span><span class="ln" style="top:391.8px;">20</span><span class="cd" style="left:520px;top:391.8px"><span style="color:#800000">SBM</span><span style="color:#00677c">-&gt;</span><span style="color:#00677c;font-style:italic">setSpeckleWindowSize</span><span style="color:#000">(</span><span style="color:#000080">0</span><span style="color:#000">);</span></span><span class="ln" style="top:414.8px;">21</span><span class="cd" style="left:520px;top:414.8px"><span style="color:#800000">SBM</span><span style="color:#00677c">-&gt;</span><span style="color:#00677c;font-style:italic">setSpeckleRange</span><span style="color:#000">(</span><span style="color:#000080">0</span><span style="color:#000">);</span></span><span class="ln" style="top:437.8px;">22</span><span class="cd" style="left:520px;top:437.8px"><span style="color:#800000">SBM</span><span style="color:#00677c">-&gt;</span><span style="color:#00677c;font-style:italic">setMinDisparity</span><span style="color:#000">(</span><span style="color:#000">-</span><span style="color:#000080">180</span><span style="color:#000">);</span></span><span class="ln" style="top:460.8px;">23</span><span class="cd" style="left:520px;top:460.8px"><span style="color:#800000">SBM</span><span style="color:#00677c">-&gt;</span><span style="color:#00677c;font-style:italic">setUniquenessRatio</span><span style="color:#000">(</span><span style="color:#000080">2</span><span style="color:#000">);</span></span><span class="ln" style="top:483.8px;">24</span><span class="cd" style="left:520px;top:483.8px"><span style="color:#800000">SBM</span><span style="color:#00677c">-&gt;</span><span style="color:#00677c;font-style:italic">setBlockSize</span><span style="color:#000">(</span><span style="color:#000080">5</span><span style="color:#000">);</span></span><span class="ln" style="top:506.79999999999995px;font-weight:bold;color:#7a7a7a;">25</span><span class="ln" style="top:529.8px;">26</span><span class="cd" style="left:476px;top:529.8px"><span style="color:#008000">//    left_matcher = cv::StereoSGBM::create(-125,144,11,484,3872,1,63,10,100,32,cv::StereoSGBM::MODE_SGBM);</span></span><span class="ln" style="top:552.8px;">27</span><span class="ln" style="top:575.8px;">28</span><span class="cd" style="left:476px;top:575.8px"><span style="color:#008000">//    WLS_filter = cv::ximgproc::createDisparityWLSFilter(left_matcher);</span></span><span class="ln" style="top:598.8px;">29</span><span class="ln" style="top:621.8px;">30</span><span class="cd" style="left:476px;top:621.8px"><span style="color:#008000">//    right_matcher = cv::ximgproc::createRightMatcher(left_matcher);</span></span><span class="ln" style="top:644.8px;">31</span><span class="ln" style="top:667.8px;">32</span><span class="cd" style="left:509px;top:667.8px"><span style="color:#800000">SGBM</span><span style="color:#00677c"> = </span><span style="color:#800080">cv</span><span style="color:#000">::</span><span style="color:#800080">StereoSGBM</span><span style="color:#000">::</span><span style="color:#00677c">create</span><span style="color:#000">(</span><span style="color:#000">-</span><span style="color:#000080">125</span><span style="color:#000">,</span><span style="color:#000080">144</span><span style="color:#000">,</span><span style="color:#000080">11</span><span style="color:#000">,</span><span style="color:#000080">484</span><span style="color:#000">,</span><span style="color:#000080">3872</span><span style="color:#000">,</span><span style="color:#000080">1</span><span style="color:#000">,</span><span style="color:#000080">63</span><span style="color:#000">,</span><span style="color:#000080">10</span><span style="color:#000">,</span><span style="color:#000080">100</span><span style="color:#000">,</span><span style="color:#000080">32</span><span style="color:#000">,</span><span style="color:#800080">cv</span><span style="color:#000">::</span><span style="color:#800080">StereoSGBM</span><span style="color:#000">::</span><span style="color:#800080">MODE_SGBM</span><span style="color:#000">);</span></span><span class="ln" style="top:690.8px;">33</span><span class="cd" style="left:476px;top:690.8px"><span style="color:#008000">//  SGBM = cv::StereoSGBM::create(-9,256,11,0,0,1,63,10,100,32,cv::StereoSGBM::MODE_SGBM);</span></span><div class="r" style="left:445px;top:275px;width:2px;height:23px;background:#008000;"></div><div class="r" style="left:445px;top:298px;width:2px;height:230px;background:#ee1111;"></div><div class="r" style="left:445px;top:528px;width:2px;height:115px;background:#008000;"></div><div class="r" style="left:445px;top:666px;width:2px;height:23px;background:#ee1111;"></div><div class="r" style="left:445px;top:689px;width:2px;height:23px;background:#008000;"></div><div class="r" style="left:1895px;top:92px;width:25px;height:624px;background:#f0f0f0;"></div><div class="r" style="left:1895px;top:126px;width:24px;height:38px;background:#cdcdcd;"></div><svg class="r" style="left:1901px;top:100px" width="13" height="10" viewBox="0 0 13 10"><path d="M1.800 8.200L6.500 3L11.200 8.200" fill="none" stroke="#555" stroke-width="2.700"/></svg><svg class="r" style="left:1901px;top:698.5px" width="13" height="10" viewBox="0 0 13 10"><path d="M1.800 1.800L6.500 7L11.200 1.800" fill="none" stroke="#555" stroke-width="2.700"/></svg><div class="r" style="left:1897px;top:516px;width:21px;height:1px;background:#e8a838;"></div><div class="r" style="left:1897px;top:542px;width:21px;height:1px;background:#e8a838;"></div><div class="r" style="left:1897px;top:629px;width:21px;height:1px;background:#e8a838;"></div><div class="r" style="left:385px;top:717px;width:1535px;height:25px;background:#f0f0f0;"></div><div class="r" style="left:411px;top:717px;width:668px;height:24px;background:#cdcdcd;"></div><svg class="r" style="left:392px;top:723px" width="10" height="13" viewBox="0 0 10 13"><path d="M8.200 1.600L3 6.500L8.200 11.400" fill="none" stroke="#4a4a4a" stroke-width="2.900"/></svg><svg class="r" style="left:1876px;top:723px" width="10" height="13" viewBox="0 0 10 13"><path d="M1.800 1.600L7 6.500L1.800 11.400" fill="none" stroke="#4a4a4a" stroke-width="2.900"/></svg><div class="r" style="left:385px;top:742px;width:1535px;height:25px;background:#404244;"></div><span class="t" style="left:390.0px;top:746.1px;font-size:16.2px;line-height:21px;color:#fff;letter-spacing:-0.173px;">Вывод приложения</span><div class="r" style="left:589px;top:746px;width:1px;height:18px;background:#5c5e60;"></div><svg class="r" style="left:598px;top:747.5px" width="16" height="15" viewBox="0 0 16 15"><path d="M4.400 0.400h1.600v4.600h-1.600z" fill="#d0d0d0"/><path d="M2.900 5h4.600l0.600 2.400h-5.800z" fill="#d0d0d0"/><path d="M2.100 8.300h6.200l1 4.300h-8.600z" fill="#d0d0d0"/><path d="M9.400 9.300h4.700v4.700h-6.700" fill="none" stroke="#d0d0d0" stroke-width="1.200"/></svg><svg class="r" style="left:624px;top:748px" width="9" height="14" viewBox="0 0 9 14"><path d="M7 0.800L1.500 6.800L7 12.800" fill="none" stroke="#5e6062" stroke-width="1.400"/></svg><svg class="r" style="left:647px;top:748px" width="9" height="14" viewBox="0 0 9 14"><path d="M1.500 0.800L7 6.800L1.500 12.800" fill="none" stroke="#5e6062" stroke-width="1.400"/></svg><svg class="r" style="left:669px;top:748px" width="12" height="14" viewBox="0 0 12 14"><path d="M0.200 0.200L10.500 6.900L0.200 13.600Z" fill="#5e6062"/></svg><div class="r" style="left:691px;top:748.5px;width:12.3px;height:12.5px;background:#e57f82;"></div><svg class="r" style="left:715px;top:747.5px" width="14" height="15" viewBox="0 0 14 15"><path d="M0.200 0.300L10.600 6.900L0.200 13.800Z" fill="#7dbb5e"/><ellipse cx="8.300" cy="11.400" rx="2.300" ry="2.900" fill="#d0d0d0" stroke="#404244" stroke-width="0.800"/><path d="M4.600 9.600h7.400M4.400 11.600h7.800M4.800 13.600h7" stroke="#d0d0d0" stroke-width="0.900"/><path d="M8.300 8.500v6" stroke="#404244" stroke-width="0.700"/></svg><svg class="r" style="left:736px;top:748px" width="14" height="14" viewBox="0 0 14 14"><g transform="translate(6.900,6.800)"><rect x="-1.300" y="-6.300" width="2.600" height="3" fill="#d0d0d0" transform="rotate(0)"/><rect x="-1.300" y="-6.300" width="2.600" height="3" fill="#d0d0d0" transform="rotate(45)"/><rect x="-1.300" y="-6.300" width="2.600" height="3" fill="#d0d0d0" transform="rotate(90)"/><rect x="-1.300" y="-6.300" width="2.600" height="3" fill="#d0d0d0" transform="rotate(135)"/><rect x="-1.300" y="-6.300" width="2.600" height="3" fill="#d0d0d0" transform="rotate(180)"/><rect x="-1.300" y="-6.300" width="2.600" height="3" fill="#d0d0d0" transform="rotate(225)"/><rect x="-1.300" y="-6.300" width="2.600" height="3" fill="#d0d0d0" transform="rotate(270)"/><rect x="-1.300" y="-6.300" width="2.600" height="3" fill="#d0d0d0" transform="rotate(315)"/><circle r="3.500" fill="none" stroke="#d0d0d0" stroke-width="2"/></g></svg><div class="r" style="left:755px;top:742.7px;width:224px;height:24.3px;background:#fff;"></div><svg class="r" style="left:760px;top:747px" width="18" height="15" viewBox="0 0 18 15"><circle cx="8.700" cy="5.300" r="3.900" fill="none" stroke="#6e6e6e" stroke-width="1.300"/><path d="M5.800 8.200L1.400 12.800" stroke="#6e6e6e" stroke-width="1.600"/><path d="M12.800 11.200h3.600l-1.800 2.200z" fill="#6e6e6e"/></svg><span class="t" style="left:782.0px;top:746.1px;font-size:16.2px;line-height:21px;color:#a2a2a2;letter-spacing:-0.085px;">Фильтр</span><svg class="r" style="left:983px;top:748px" width="14" height="14" viewBox="0 0 14 14"><path d="M0.800 6.900h12.300M6.950 0.900v12" stroke="#dcdcdc" stroke-width="1.900"/></svg><svg class="r" style="left:1006px;top:748px" width="14" height="14" viewBox="0 0 14 14"><path d="M0.900 6.900h12.200" stroke="#dcdcdc" stroke-width="1.900"/></svg><svg class="r" style="left:1878.7px;top:751px" width="12" height="10" viewBox="0 0 12 10"><path d="M1.500 7L6 2.500L10.500 7" fill="none" stroke="#d4d4d4" stroke-width="1.300"/></svg><svg class="r" style="left:1902px;top:751.5px" width="13" height="11" viewBox="0 0 13 11"><path d="M1.400 1.100h9.800v8.200H1.400z" fill="none" stroke="#d4d4d4" stroke-width="1.200"/><path d="M1.400 1.600h9.800" stroke="#d4d4d4" stroke-width="1.800"/><path d="M4 4.700h4.600l-2.300 2.500z" fill="#d4d4d4"/></svg><div class="r" style="left:385px;top:767px;width:1535px;height:33px;background:#f0f0f0;"></div><div class="r" style="left:385px;top:767px;width:239px;height:33px;background:#fff;"></div><div class="r" style="left:624px;top:798px;width:1296px;height:1px;background:#b8b8b8;"></div><span class="t" style="left:403.0px;top:773.5px;font-size:16.2px;line-height:21px;color:#000;letter-spacing:-0.319px;">OpenCV-Qt-StereoVision</span><svg class="r" style="left:586px;top:776px" width="14" height="14" viewBox="0 0 14 14"><rect x="0.75" y="0.75" width="12.5" height="12.5" rx="2" fill="#e8775c" stroke="#d8563a" stroke-width="1.3"/><path d="M4 4l6 6M10 4l-6 6" stroke="#fff" stroke-width="2"/></svg><span class="cd" style="left:389px;top:802.300px;color:#000;font-size:18px;letter-spacing:1.2px">Out:  112</span><span class="cd" style="left:389px;top:827.200px;color:#000;font-size:18px;letter-spacing:1.2px">Out:  113</span><div class="r" style="left:1895px;top:800px;width:25px;height:60px;background:#f0f0f0;"></div><svg class="r" style="left:1901px;top:808px" width="13" height="10" viewBox="0 0 13 10"><path d="M1.800 8.200L6.500 3L11.200 8.200" fill="none" stroke="#555" stroke-width="2.700"/></svg><div class="r" style="left:0px;top:790px;width:80px;height:1px;background:#595b5c;"></div><span class="t" style="left:3.0px;top:797.5px;font-size:14.6px;line-height:19px;color:#fff;letter-spacing:-0.267px;">Open...sion</span><svg class="r" style="left:28px;top:824px" width="25" height="20" viewBox="0 0 25 20"><rect x="1" y="1" width="22" height="17" rx="1.500" fill="#5d5f5f" stroke="#c8c8c8" stroke-width="1.800"/></svg><div class="r" style="left:65px;top:840px;width:1px;height:2px;background:#c8c8c8;"></div></div>
</body></html>
